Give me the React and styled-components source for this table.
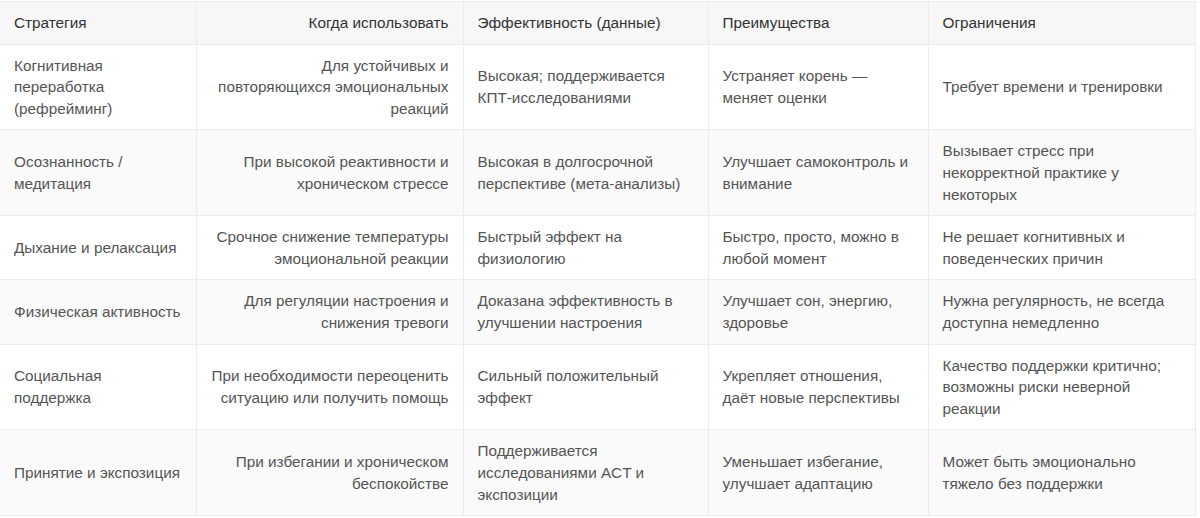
import React from "react";
import styled, { createGlobalStyle } from "styled-components";

const GlobalStyle = createGlobalStyle`
  body {
    margin: 0;
    background: #fff;
    font-family: "Liberation Sans", Arial, sans-serif;
  }
`;

const Wrapper = styled.div`
  padding-top: 1px;
  width: 1195px;
`;

const Table = styled.table`
  width: 100%;
  border-collapse: collapse;
  table-layout: fixed;
  font-size: 15.3px;
  line-height: 21.6px;
`;

const HeadCell = styled.th`
  background: #f7f7f8;
  color: #333;
  font-weight: 400;
  padding: 10px 14px;
  text-align: ${(p) => (p.$right ? "right" : "left")};
  border: 1px solid #ececec;
  border-left: none;
`;

const Row = styled.tr`
  background: ${(p) => (p.$even ? "#fafafa" : "#fff")};
`;

const Cell = styled.td`
  color: #555;
  padding: 10px 14px;
  vertical-align: middle;
  text-align: ${(p) => (p.$right ? "right" : "left")};
  border: 1px solid #ececec;
  border-left: none;
`;

const columns = [
  { title: "Стратегия", width: 196 },
  { title: "Когда использовать", width: 267, right: true },
  { title: "Эффективность (данные)", width: 245 },
  { title: "Преимущества", width: 220 },
  { title: "Ограничения", width: 267 },
];

const rows = [
  [
    "Когнитивная переработка (рефрейминг)",
    "Для устойчивых и повторяющихся эмоциональных реакций",
    "Высокая; поддерживается КПТ-исследованиями",
    "Устраняет корень — меняет оценки",
    "Требует времени и тренировки",
  ],
  [
    "Осознанность / медитация",
    "При высокой реактивности и хроническом стрессе",
    "Высокая в долгосрочной перспективе (мета-анализы)",
    "Улучшает самоконтроль и внимание",
    "Вызывает стресс при некорректной практике у некоторых",
  ],
  [
    "Дыхание и релаксация",
    "Срочное снижение температуры эмоциональной реакции",
    "Быстрый эффект на физиологию",
    "Быстро, просто, можно в любой момент",
    "Не решает когнитивных и поведенческих причин",
  ],
  [
    "Физическая активность",
    "Для регуляции настроения и снижения тревоги",
    "Доказана эффективность в улучшении настроения",
    "Улучшает сон, энергию, здоровье",
    "Нужна регулярность, не всегда доступна немедленно",
  ],
  [
    "Социальная поддержка",
    "При необходимости переоценить ситуацию или получить помощь",
    "Сильный положительный эффект",
    "Укрепляет отношения, даёт новые перспективы",
    "Качество поддержки критично; возможны риски неверной реакции",
  ],
  [
    "Принятие и экспозиция",
    "При избегании и хроническом беспокойстве",
    "Поддерживается исследованиями ACT и экспозиции",
    "Уменьшает избегание, улучшает адаптацию",
    "Может быть эмоционально тяжело без поддержки",
  ],
];

const App = () => (
  <>
    <GlobalStyle />
    <Wrapper>
      <Table>
        <colgroup>
          {columns.map((c) => (
            <col key={c.title} style={{ width: c.width }} />
          ))}
        </colgroup>
        <thead>
          <tr>
            {columns.map((c) => (
              <HeadCell key={c.title} $right={c.right}>
                {c.title}
              </HeadCell>
            ))}
          </tr>
        </thead>
        <tbody>
          {rows.map((r, i) => (
            <Row key={i} $even={i % 2 === 1}>
              {r.map((text, j) => (
                <Cell key={j} $right={columns[j].right}>
                  {text}
                </Cell>
              ))}
            </Row>
          ))}
        </tbody>
      </Table>
    </Wrapper>
  </>
);

export default App;
